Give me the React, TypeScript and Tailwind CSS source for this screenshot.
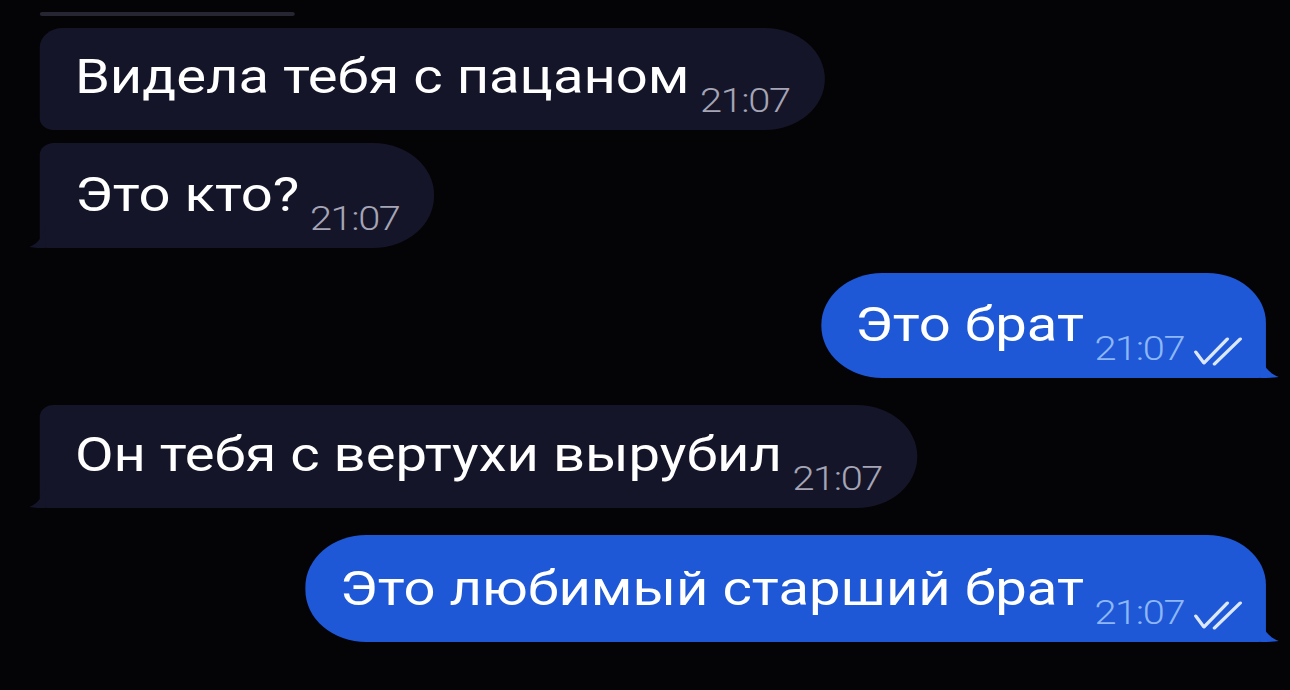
import React from "react";

type Msg = {
  text: string;
  time: string;
  out?: boolean;
  tail?: boolean;
  top?: boolean;
  mt: string;
  h: string;
};

const messages: Msg[] = [
  { text: "Видела тебя с пацаном", time: "21:07", top: true, mt: "mt-[12px]", h: "h-[102px]" },
  { text: "Это кто?", time: "21:07", tail: true, mt: "mt-[13px]", h: "h-[105px]" },
  { text: "Это брат", time: "21:07", out: true, tail: true, mt: "mt-[25px]", h: "h-[105px]" },
  { text: "Он тебя с вертухи вырубил", time: "21:07", tail: true, mt: "mt-[27px]", h: "h-[103px]" },
  { text: "Это любимый старший брат", time: "21:07", out: true, tail: true, mt: "mt-[27px]", h: "h-[107px]" },
];

function DoubleCheck() {
  return (
    <svg width="42" height="30" viewBox="0 0 42 30" fill="none" className="mb-[12px] ml-[8px]">
      <path d="M2 16 L9 27 L29 3" stroke="#dbe8ff" strokeWidth="3" strokeLinecap="round" strokeLinejoin="round" />
      <path d="M18 28 L40 3" stroke="#dbe8ff" strokeWidth="3" strokeLinecap="round" />
    </svg>
  );
}

function Tail({ out }: { out?: boolean }) {
  // little hook at the bottom corner of the last bubble in a group
  if (out) {
    return (
      <svg width="16" height="34" viewBox="0 0 16 34" className="absolute -right-[11px] bottom-0">
        <path d="M0 0 C0 18 5 28 16 33 C10 34 5 34 0 34 Z" fill="#1e58d6" />
      </svg>
    );
  }
  return (
    <svg width="14" height="30" viewBox="0 0 14 30" className="absolute -left-[9px] bottom-0">
      <path d="M14 0 C14 15 9 25 0 29 C5 30 9 30 14 30 Z" fill="#151529" />
    </svg>
  );
}

function Bubble({ m }: { m: Msg }) {
  const shape = m.out
    ? "self-end bg-[#1e58d6] rounded-l-[52px] rounded-tr-[50px] rounded-br-[6px] pl-[29px] pr-[20px]"
    : `self-start bg-[#151529] rounded-r-[52px] ${m.top ? "rounded-tl-[20px] rounded-bl-[12px]" : "rounded-tl-[12px] rounded-bl-[6px]"} pl-[30px] pr-[30px]`;

  return (
    <div className={`relative flex items-end ${m.h} ${m.mt} ${shape}`}>
      <span className="mb-[29px] text-[48px] leading-none text-white">{m.text}</span>
      <span
        className={`mb-[13px] ml-[9px] text-[34px] font-light leading-none tracking-[-1.2px] ${
          m.out ? "text-[#8db7f7]" : "text-[#a5a5b6]"
        }`}
      >
        {m.time}
      </span>
      {m.out && <DoubleCheck />}
      {m.tail && <Tail out={m.out} />}
    </div>
  );
}

export default function App() {
  return (
    <div className="w-[1290px] h-[690px] overflow-hidden bg-[#040407]">
      {/* the chat is drawn at phone width and stretched out to the window */}
      <div className="w-[1103px] h-[690px] origin-top-left scale-x-[1.17] font-['Roboto',sans-serif] flex flex-col pl-[34px] pr-[21px] pt-[12px]">
        {/* end of the previous bubble peeking in at the top */}
        <div className="h-[4px] w-[218px] bg-[#262632] rounded-full" />
        {messages.map((m, i) => (
          <Bubble key={i} m={m} />
        ))}
      </div>
    </div>
  );
}
